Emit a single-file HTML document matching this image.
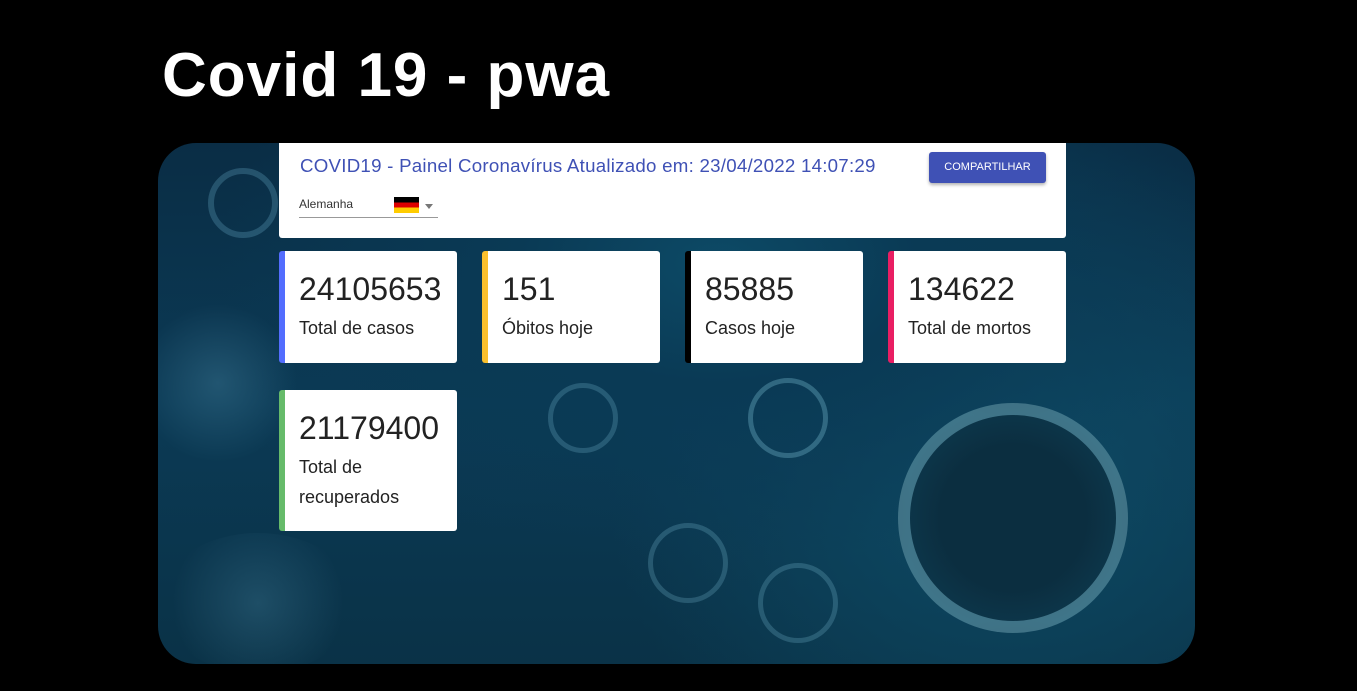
<!DOCTYPE html>
<html><head><meta charset="utf-8"><style>
*{margin:0;padding:0;box-sizing:border-box}
body{width:1357px;height:691px;background:#000;position:relative;overflow:hidden;font-family:"Liberation Sans",Arial,sans-serif}
h1{position:absolute;left:162px;top:40px;color:#fff;font-size:62px;font-weight:bold;letter-spacing:1px}
.panel{position:absolute;left:158px;top:143px;width:1037px;height:521px;border-radius:38px;overflow:hidden;
background:radial-gradient(ellipse 500px 300px at 560px 120px,#0d4a66 0%,#0a3a55 40%,transparent 100%),
radial-gradient(ellipse 400px 350px at 850px 340px,#0e4a64 0%,transparent 100%),
linear-gradient(180deg,#0a2d45 0%,#0b3a55 50%,#0a3247 100%)}
.v{position:absolute;border-radius:50%}
.head{position:absolute;left:279px;top:143px;width:787px;height:95px;background:#fff;border-radius:0 0 3px 3px}
.head .t{position:absolute;left:21px;top:12px;color:#3f51b5;font-size:18.7px;letter-spacing:0.25px}
.btn{position:absolute;left:650px;top:9px;width:117px;height:31px;background:#3f51b5;color:#fff;font-size:11px;border-radius:3px;text-align:center;line-height:31px;box-shadow:0 2px 3px rgba(0,0,0,.3)}
.sel{position:absolute;left:20px;top:54px;width:139px;height:21px;border-bottom:1px solid #999;font-size:12px;color:#333}
.flag{position:absolute;left:95px;top:0px;width:25px;height:16px;background:linear-gradient(#000 33%,#d00 33%,#d00 66%,#fc0 66%)}
.arr{position:absolute;left:126px;top:7px;border:4px solid transparent;border-top:5px solid #777;border-bottom:0}
.card{position:absolute;width:178px;background:#fff;border-radius:3px;border-left:6px solid}
.card .n{position:absolute;left:14px;top:20px;font-size:32px;color:#222}
.card .l{position:absolute;left:14px;top:62px;font-size:18px;color:#222;line-height:30px}
</style></head><body>
<h1>Covid 19 - pwa</h1>
<div class="panel">
<div class="v" style="left:50px;top:25px;width:70px;height:70px;border:6px solid rgba(120,190,220,.25)"></div>
<div class="v" style="left:-20px;top:160px;width:160px;height:160px;background:radial-gradient(circle,rgba(100,170,200,.25),transparent 70%)"></div>
<div class="v" style="left:0px;top:390px;width:200px;height:140px;background:radial-gradient(circle,rgba(100,170,200,.22),transparent 70%)"></div>
<div class="v" style="left:740px;top:260px;width:230px;height:230px;border:12px solid rgba(140,210,230,.4);background:radial-gradient(circle,#0b2e40 50%,#0f3f55)"></div>
<div class="v" style="left:590px;top:235px;width:80px;height:80px;border:5px solid rgba(140,210,230,.3)"></div>
<div class="v" style="left:390px;top:240px;width:70px;height:70px;border:5px solid rgba(140,210,230,.22)"></div>
<div class="v" style="left:490px;top:380px;width:80px;height:80px;border:5px solid rgba(140,210,230,.22)"></div>
<div class="v" style="left:600px;top:420px;width:80px;height:80px;border:5px solid rgba(140,210,230,.22)"></div>
</div>
<div class="head">
<div class="t">COVID19 - Painel Coronavírus Atualizado em: 23/04/2022 14:07:29</div>
<div class="btn">COMPARTILHAR</div>
<div class="sel">Alemanha<div class="flag"></div><div class="arr"></div></div>
</div>
<div class="card" style="left:279px;top:251px;height:112px;border-color:#536dfe"><div class="n">24105653</div><div class="l">Total de casos</div></div>
<div class="card" style="left:482px;top:251px;height:112px;border-color:#fbc02d"><div class="n">151</div><div class="l">Óbitos hoje</div></div>
<div class="card" style="left:685px;top:251px;height:112px;border-color:#000"><div class="n">85885</div><div class="l">Casos hoje</div></div>
<div class="card" style="left:888px;top:251px;height:112px;border-color:#e91e63"><div class="n">134622</div><div class="l">Total de mortos</div></div>
<div class="card" style="left:279px;top:390px;height:141px;border-color:#66bb6a"><div class="n">21179400</div><div class="l">Total de<br>recuperados</div></div>
</body></html>
